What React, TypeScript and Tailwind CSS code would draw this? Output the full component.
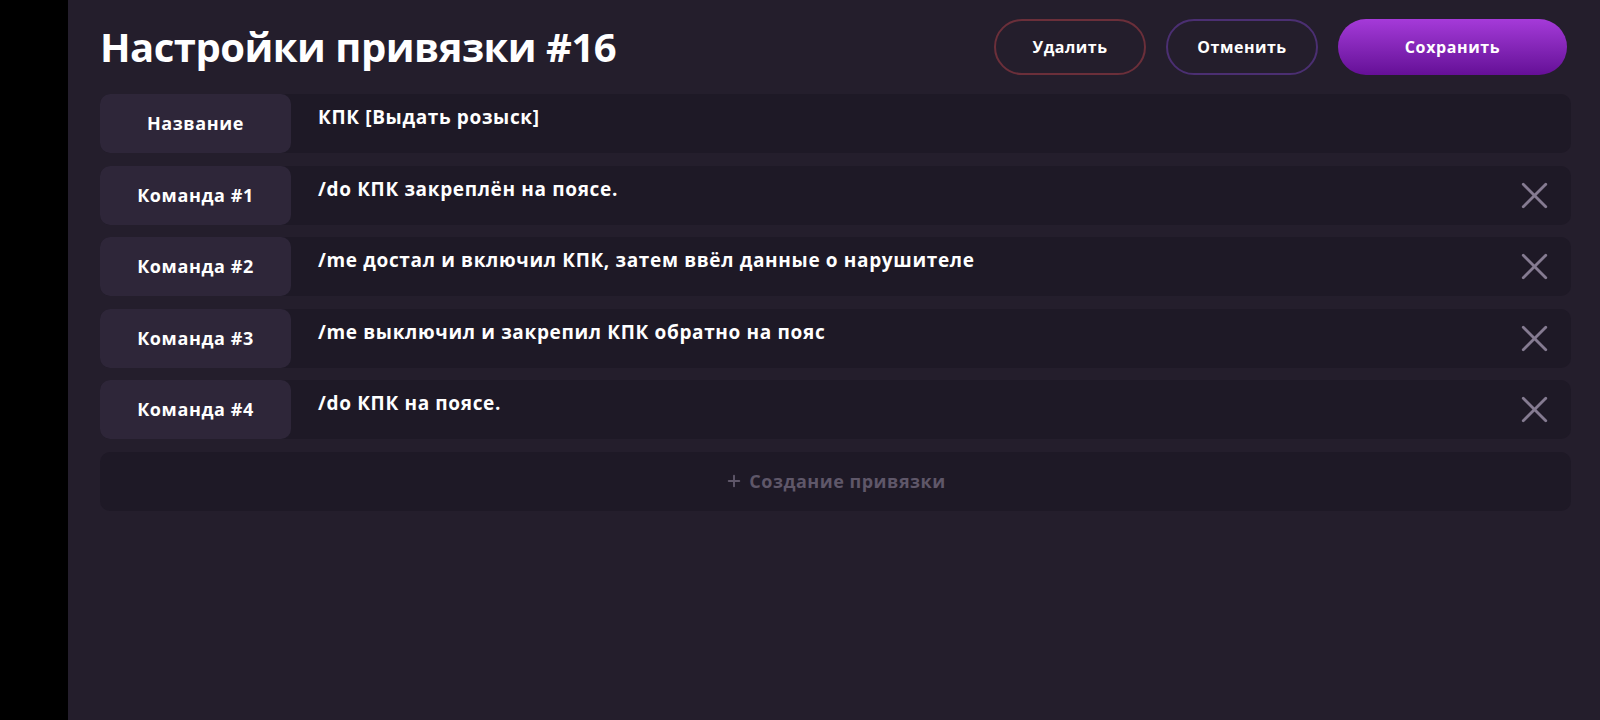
import { X, Plus } from "lucide-react";

const commands = [
  "/do КПК закреплён на поясе.",
  "/me достал и включил КПК, затем ввёл данные о нарушителе",
  "/me выключил и закрепил КПК обратно на пояс",
  "/do КПК на поясе.",
];

const Row = ({
  label,
  value,
  removable,
}: {
  label: string;
  value: string;
  removable?: boolean;
}) => (
  <div className="flex h-[59px] rounded-[10px] bg-[#1e1926]">
    <div className="flex w-[191px] shrink-0 items-center justify-center rounded-[10px] bg-[#2e2639] text-[18px] font-bold tracking-[0.6px] text-white">
      {label}
    </div>
    <div className="flex-1 pl-[27px] pt-[9px] text-[19px] font-bold tracking-[0.65px] text-white">
      {value}
    </div>
    {removable && (
      <button
        type="button"
        className="mr-[14px] flex items-center text-[#857b91]"
        aria-label="Удалить команду"
      >
        <X className="h-[45px] w-[45px]" strokeWidth={1.5} />
      </button>
    )}
  </div>
);

export default function App() {
  return (
    <div
      className="flex h-[720px] w-[1600px] bg-black"
      style={{ fontFamily: "'Open Sans', 'Noto Sans', sans-serif" }}
    >
      <div className="w-[68px] shrink-0" />
      <div className="flex flex-1 flex-col bg-[#241e2c] pl-[32px] pr-[29px] pt-[19px]">
        <div className="flex h-[56px] items-center">
          <h1 className="flex-1 text-[40px] font-bold tracking-[-0.5px] text-white">
            Настройки привязки #16
          </h1>
          <div className="mr-[4px] flex gap-[20px]">
            <button className="h-[56px] w-[152px] rounded-full border-2 border-[#6b2f3a] text-[16px] font-bold tracking-[0.5px] text-white">
              Удалить
            </button>
            <button className="h-[56px] w-[152px] rounded-full border-2 border-[#4b2f72] text-[16px] font-bold tracking-[0.5px] text-white">
              Отменить
            </button>
            <button className="h-[56px] w-[229px] rounded-full bg-gradient-to-b from-[#a53ad9] to-[#650f97] text-[16px] font-bold tracking-[0.6px] text-white">
              Сохранить
            </button>
          </div>
        </div>
        <div className="mt-[19px] flex flex-col gap-[12.5px]">
          <Row label="Название" value="КПК [Выдать розыск]" />
          {commands.map((c, i) => (
            <Row key={i} label={`Команда #${i + 1}`} value={c} removable />
          ))}
          <button className="flex h-[59px] items-center justify-center gap-[6px] rounded-[10px] bg-[#1e1926] text-[18px] font-bold tracking-[0.5px] text-[#5f5769]">
            <Plus className="h-[18px] w-[18px]" strokeWidth={2.6} />
            Создание привязки
          </button>
        </div>
      </div>
    </div>
  );
}
